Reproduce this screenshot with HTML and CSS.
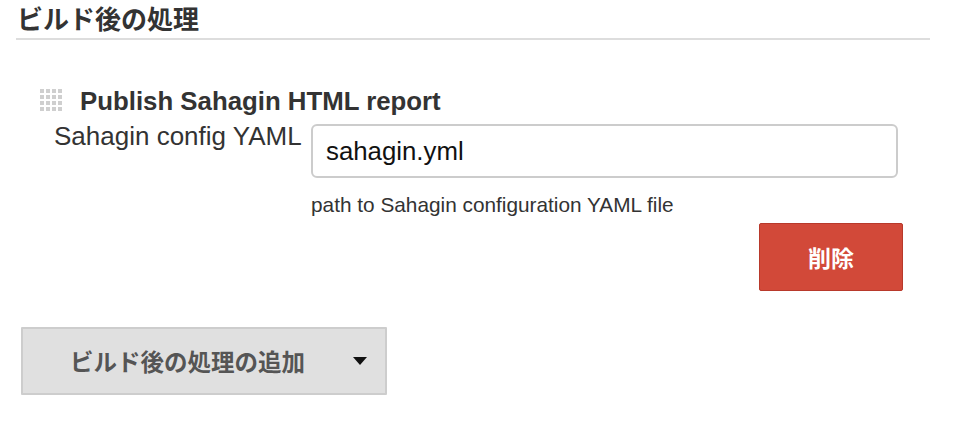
FILE: index.html
```html
<!DOCTYPE html>
<html lang="ja">
<head>
<meta charset="utf-8">
<title>ビルド後の処理</title>
<link rel="stylesheet" href="styles.css">
</head>
<body>
<div class="page">
  <h2 class="section-title">ビルド後の処理</h2>
  <div class="builder">
    <div class="builder-head">
      <svg class="handle" width="24" height="24" viewBox="0 0 24 24" aria-hidden="true">
        <g fill="#cfcfcf">
          <rect x="0" y="0" width="4" height="4"/><rect x="6" y="0" width="4" height="4"/><rect x="12" y="0" width="4" height="4"/><rect x="18" y="0" width="4" height="4"/>
          <rect x="0" y="6" width="4" height="4"/><rect x="6" y="6" width="4" height="4"/><rect x="12" y="6" width="4" height="4"/><rect x="18" y="6" width="4" height="4"/>
          <rect x="0" y="12" width="4" height="4"/><rect x="6" y="12" width="4" height="4"/><rect x="12" y="12" width="4" height="4"/><rect x="18" y="12" width="4" height="4"/>
          <rect x="0" y="18" width="4" height="4"/><rect x="6" y="18" width="4" height="4"/><rect x="12" y="18" width="4" height="4"/><rect x="18" y="18" width="4" height="4"/>
        </g>
      </svg>
      <span class="builder-name">Publish Sahagin HTML report</span>
    </div>
    <div class="field">
      <label class="field-label" for="yaml">Sahagin config YAML</label>
      <div class="field-control">
        <input id="yaml" class="text-input" type="text" value="sahagin.yml">
        <div class="help">path to Sahagin configuration YAML file</div>
      </div>
    </div>
    <div class="actions">
      <button class="btn-delete" type="button">削除</button>
    </div>
  </div>
  <button class="btn-add" type="button"><span class="btn-add-text">ビルド後の処理の追加</span><span class="caret"></span></button>
</div>
</body>
</html>
```
FILE: styles.css
```css
html, body {
  margin: 0;
  padding: 0;
  background: #fff;
}
body {
  font-family: "Liberation Sans", Arial, "Noto Sans CJK JP", sans-serif;
  color: #333;
}
.page {
  padding: 0 34px 0 16px;
}
.section-title {
  margin: 0;
  padding: 3px 0 5px 1px;
  font-size: 26px;
  line-height: 30px;
  font-weight: bold;
  color: #333;
  font-family: "Noto Sans CJK JP", sans-serif;
  border-bottom: 2px solid #dddddd;
}
.builder {
  padding: 48px 0 0 24px;
}
.builder-head {
  display: flex;
  align-items: center;
  gap: 16px;
  height: 26px;
}
.handle {
  display: block;
}
.builder-name {
  font-weight: bold;
  font-size: 25.8px;
  line-height: 26px;
  color: #333;
}
.field {
  display: flex;
  align-items: flex-start;
  margin-top: 8px;
}
.field-label {
  flex: none;
  width: 271px;
  padding-left: 14px;
  box-sizing: border-box;
  font-size: 26px;
  line-height: 28px;
  color: #333;
}
.field-control {
  display: flex;
  flex-direction: column;
  width: 587px;
}
.text-input {
  box-sizing: border-box;
  width: 587px;
  height: 54px;
  margin: 2px 0 0;
  padding: 0 13px;
  border: 2px solid #cccccc;
  border-radius: 6px;
  font-family: "Liberation Sans", Arial, sans-serif;
  font-size: 25.8px;
  color: #111;
  background: #fff;
  outline: none;
}
.help {
  margin-top: 15px;
  font-size: 20.8px;
  line-height: 24px;
  color: #333;
}
.actions {
  display: flex;
  justify-content: flex-end;
  margin-top: 6px;
  padding-right: 27px;
}
.btn-delete {
  width: 144px;
  height: 68px;
  margin: 0;
  border: 1px solid #b8392b;
  border-radius: 2px;
  background: #d24939;
  color: #fff;
  font-family: "Noto Sans CJK JP", sans-serif;
  font-weight: bold;
  font-size: 23px;
}
.btn-add {
  display: flex;
  align-items: center;
  margin: 36px 0 0 5px;
  width: 366px;
  height: 68px;
  padding: 0 18px 0 47px;
  box-sizing: border-box;
  border: 2px solid #cdcdcd;
  border-radius: 1px;
  background: #e0e0e0;
  color: #555;
  font-family: "Noto Sans CJK JP", sans-serif;
  font-weight: bold;
  font-size: 23.5px;
}
.btn-add-text {
  flex: 1;
  text-align: left;
}
.caret {
  width: 0;
  height: 0;
  border-left: 7px solid transparent;
  border-right: 7px solid transparent;
  border-top: 8px solid #111;
}
```
